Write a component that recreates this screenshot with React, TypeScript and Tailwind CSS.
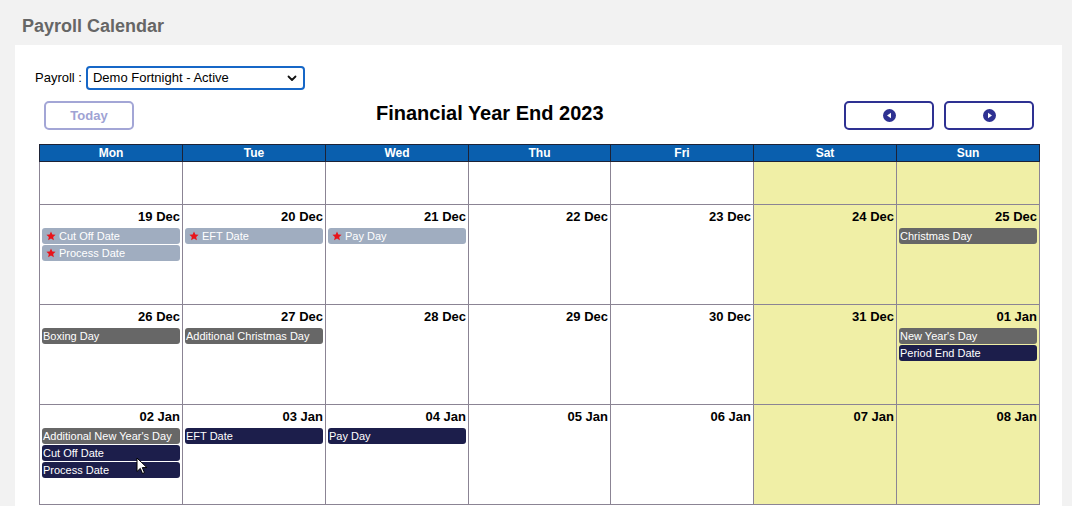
import { ReactNode } from 'react'

type Ev = { label: string; kind: 'pending' | 'holiday' | 'payroll' }
type Day = { date?: string; weekend?: boolean; events?: Ev[] }

const DAYS = ['Mon', 'Tue', 'Wed', 'Thu', 'Fri', 'Sat', 'Sun']

const WEEKS: Array<{ height: string; days: Day[] }> = [
  {
    height: 'h-[43px]',
    days: [{}, {}, {}, {}, {}, { weekend: true }, { weekend: true }],
  },
  {
    height: 'h-[100px]',
    days: [
      {
        date: '19 Dec',
        events: [
          { label: 'Cut Off Date', kind: 'pending' },
          { label: 'Process Date', kind: 'pending' },
        ],
      },
      { date: '20 Dec', events: [{ label: 'EFT Date', kind: 'pending' }] },
      { date: '21 Dec', events: [{ label: 'Pay Day', kind: 'pending' }] },
      { date: '22 Dec' },
      { date: '23 Dec' },
      { date: '24 Dec', weekend: true },
      { date: '25 Dec', weekend: true, events: [{ label: 'Christmas Day', kind: 'holiday' }] },
    ],
  },
  {
    height: 'h-[100px]',
    days: [
      { date: '26 Dec', events: [{ label: 'Boxing Day', kind: 'holiday' }] },
      { date: '27 Dec', events: [{ label: 'Additional Christmas Day', kind: 'holiday' }] },
      { date: '28 Dec' },
      { date: '29 Dec' },
      { date: '30 Dec' },
      { date: '31 Dec', weekend: true },
      {
        date: '01 Jan',
        weekend: true,
        events: [
          { label: "New Year's Day", kind: 'holiday' },
          { label: 'Period End Date', kind: 'payroll' },
        ],
      },
    ],
  },
  {
    height: 'h-[100px]',
    days: [
      {
        date: '02 Jan',
        events: [
          { label: "Additional New Year's Day", kind: 'holiday' },
          { label: 'Cut Off Date', kind: 'payroll' },
          { label: 'Process Date', kind: 'payroll' },
        ],
      },
      { date: '03 Jan', events: [{ label: 'EFT Date', kind: 'payroll' }] },
      { date: '04 Jan', events: [{ label: 'Pay Day', kind: 'payroll' }] },
      { date: '05 Jan' },
      { date: '06 Jan' },
      { date: '07 Jan', weekend: true },
      { date: '08 Jan', weekend: true },
    ],
  },
]

// column widths as measured, Thu is a pixel narrower
const COLS = 'grid-cols-[143px_143px_143px_142px_143px_143px_143px]'

function Star() {
  return (
    <svg width="10" height="10" viewBox="0 0 24 24" className="shrink-0">
      <path d="M12 1l3.3 7.2 7.7.8-5.8 5.2 1.7 7.8L12 18l-6.9 4 1.7-7.8L1 9l7.7-.8z" fill="#e8141b" />
    </svg>
  )
}

function EventBar({ ev }: { ev: Ev }) {
  if (ev.kind === 'pending') {
    return (
      <div className="flex items-center gap-[3px] h-[16px] pl-[4px] rounded-[3px] bg-[#a0adc0] text-white text-[11px] leading-[16px] whitespace-nowrap overflow-hidden">
        <Star />
        <span>{ev.label}</span>
      </div>
    )
  }
  const bg = ev.kind === 'holiday' ? 'bg-[#676767]' : 'bg-[#1c1e4b]'
  return (
    <div className={`h-[16px] pl-[1px] rounded-[3px] ${bg} text-white text-[11px] leading-[16px] whitespace-nowrap overflow-hidden`}>
      {ev.label}
    </div>
  )
}

function NavButton({ children }: { children: ReactNode }) {
  return (
    <button className="w-[90px] h-[29px] flex items-center justify-center rounded-[5px] border-2 border-[#2e3192] bg-white">
      {children}
    </button>
  )
}

export default function App() {
  return (
    <div className="relative min-h-screen bg-[#f2f2f2] font-['Liberation_Sans',Arial,sans-serif] overflow-hidden">
      <h1 className="pl-[22px] pt-[15px] h-[45px] text-[18px] leading-[22px] font-bold text-[#666666]">Payroll Calendar</h1>

      <div className="ml-[15px] w-[1047px] bg-white pl-[20px] pt-[21px] pb-[30px]">
        <div className="flex items-center h-[24px] text-[13px] text-black">
          <span>Payroll :</span>
          <div className="relative ml-[4px]">
            <select className="appearance-none w-[219px] h-[24px] pl-[5px] border-2 border-[#1667c7] rounded-[4px] bg-white text-[13px] text-black outline-none">
              <option>Demo Fortnight - Active</option>
            </select>
            <svg
              width="10"
              height="7"
              viewBox="0 0 10 7"
              className="absolute right-[8px] top-[9px] pointer-events-none"
              fill="none"
              stroke="#111"
              strokeWidth="1.8"
              strokeLinecap="round"
              strokeLinejoin="round"
            >
              <path d="M1.5 1.5L5 5l3.5-3.5" />
            </svg>
          </div>
        </div>

        <div className="flex items-start ml-[9px] mt-[11px] w-[990px]">
          <button className="w-[90px] h-[29px] rounded-[5px] border-2 border-[#a3a6d6] bg-white text-[13px] font-bold text-[#9fa3d4]">
            Today
          </button>
          <h2 className="ml-[242px] text-[20px] leading-[24px] font-bold text-black">Financial Year End 2023</h2>
          <div className="ml-auto flex gap-[10px]">
            <NavButton>
              <svg width="13" height="13" viewBox="0 0 13 13">
                <circle cx="6.5" cy="6.5" r="6.5" fill="#2e3192" />
                <path d="M4 6.5L8 3.8v5.4z" fill="#fff" />
              </svg>
            </NavButton>
            <NavButton>
              <svg width="13" height="13" viewBox="0 0 13 13">
                <circle cx="6.5" cy="6.5" r="6.5" fill="#2e3192" />
                <path d="M9 6.5L5 3.8v5.4z" fill="#fff" />
              </svg>
            </NavButton>
          </div>
        </div>

        <div className="ml-[4px] mt-[14px] w-[1001px]">
          <div className={`grid ${COLS} border-t border-l border-[#1d2235]`}>
            {DAYS.map((d) => (
              <div
                key={d}
                className="h-[17px] bg-[#0a5fae] border-r border-b border-[#1d2235] text-center text-white text-[12px] font-bold leading-[16px]"
              >
                {d}
              </div>
            ))}
          </div>
          <div className="border-l border-[#8b8494]">
            {WEEKS.map((w, i) => (
              <div key={i} className={`grid ${COLS} ${w.height}`}>
                {w.days.map((day, j) => (
                  <div
                    key={j}
                    className={`border-r border-b border-[#8b8494] px-[2px] ${day.weekend ? 'bg-[#f0efa6]' : 'bg-white'}`}
                  >
                    {day.date && (
                      <div className="h-[23px] pt-[4px] text-right text-[13px] leading-[15px] font-bold text-black">
                        {day.date}
                      </div>
                    )}
                    <div className="flex flex-col gap-[1px]">
                      {day.events?.map((ev) => <EventBar key={ev.label} ev={ev} />)}
                    </div>
                  </div>
                ))}
              </div>
            ))}
          </div>
        </div>
      </div>

      <svg width="12" height="18" viewBox="0 0 12 18" className="absolute left-[136px] top-[457px] pointer-events-none">
        <path d="M1 1v13.5l3.3-3.1 2.2 5.1 2-.9-2.2-5h4.6z" fill="#fff" stroke="#000" strokeWidth="1" strokeLinejoin="round" />
      </svg>
    </div>
  )
}
